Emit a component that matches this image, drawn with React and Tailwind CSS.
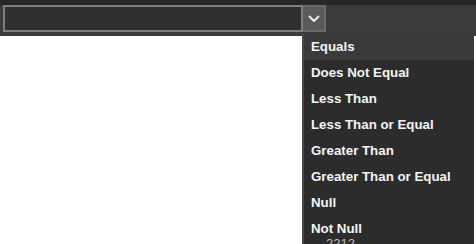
const options = [
  "Equals",
  "Does Not Equal",
  "Less Than",
  "Less Than or Equal",
  "Greater Than",
  "Greater Than or Equal",
  "Null",
  "Not Null",
];

function Chevron() {
  return (
    <svg width="12" height="8" viewBox="0 0 12 8" fill="none">
      <path d="M1.5 1.5 L6 6 L10.5 1.5" stroke="#f2f2f2" strokeWidth="1.8" strokeLinecap="round" strokeLinejoin="round" />
    </svg>
  );
}

export default function App() {
  return (
    <div className="relative w-[476px] h-[244px] overflow-hidden bg-white font-['Liberation_Sans',Arial,sans-serif]">
      {/* header bar with the select */}
      <div className="flex flex-col bg-[#3b3b3b] h-[36px]">
        <div className="h-[5px] bg-[#272727]" />
        <div className="flex items-stretch h-[27px] pl-[3px]">
          <div className="w-[300px] border-2 border-[#7e7e7e] bg-[#303030]" />
          <div className="w-[23px] flex items-center justify-center bg-[#5a5a5a] border-y-2 border-r-2 border-[#6a6a6a]">
            <Chevron />
          </div>
        </div>
      </div>

      {/* dropdown list */}
      <div className="absolute left-[302px] top-[34px] w-[172px] bottom-0 bg-[#2c2c2c] border-l-2 border-[#4a4a4a] flex flex-col">
        {options.map((o, i) => (
          <div
            key={o}
            className={
              i === 0
                ? "h-[26px] shrink-0 flex items-center pl-[7px] text-[13.3px] font-bold text-[#f4f4f4] bg-[#3a3a3a]"
                : "h-[26px] shrink-0 flex items-center pl-[7px] text-[13.3px] font-bold text-[#f4f4f4]"
            }
          >
            {o}
          </div>
        ))}
        <div className="-mt-[5px] pl-[22px] text-[13px] leading-[14px] text-[#bdbdbd]">2212</div>
      </div>
    </div>
  );
}
